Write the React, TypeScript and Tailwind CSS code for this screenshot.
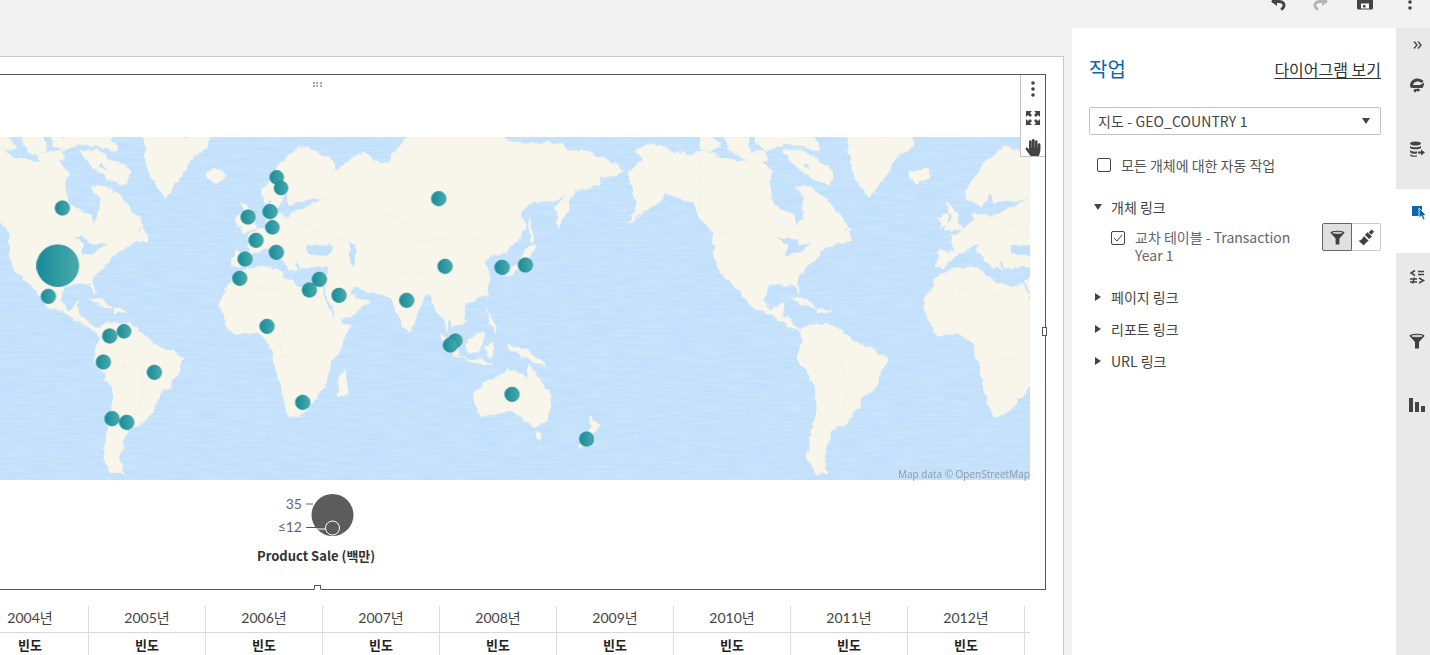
import React from "react";
import { FaHandPaper } from "react-icons/fa";

const sans = "font-['Noto_Sans_CJK_KR','Noto_Sans',sans-serif]";

// map outlines, traced at 3x of screen pixels
const americas = [
  "M-190 60 L-150 40 L-90 60 L-30 75 L10 62 L60 85 L130 95 L180 90 L215 125 L205 165 L215 210 L240 240 L285 255 L295 290 L310 245 L310 205 L290 172 L330 170 L385 212 L405 235 L440 290 L425 300 L455 332 L420 335 L378 352 L345 385 L320 412 L285 450 L297 490 L280 458 L245 462 L200 465 L190 510 L215 545 L250 515 L250 535 L240 560 L272 570 L300 600 L340 580 L400 585 L440 612 L470 642 L520 660 L562 685 L545 722 L525 772 L490 792 L480 822 L440 880 L395 897 L385 930 L370 975 L382 1030 L345 1030 L325 985 L335 900 L355 785 L322 730 L292 680 L310 625 L298 600 L262 585 L210 550 L150 525 L105 465 L60 420 L40 370 L42 312 L0 255 L-20 215 L-100 190 L-130 220 L-220 275 L-190 245 L-200 190 L-215 125 L-170 90 Z",
  "M0 21 L35 21 L62 50 L25 62 L0 52 Z",
  "M75 21 L140 21 L150 60 L110 70 L85 48 Z",
  "M115 72 L195 62 L205 92 L135 88 Z",
  "M165 21 L345 21 L362 62 L300 47 L245 42 L205 60 L175 45 Z",
  "M250 62 L300 60 L405 125 L388 162 L345 148 L290 112 Z",
  "M420 312 L445 295 L458 330 L430 325 Z",
  "M445 21 L640 21 L635 50 L590 80 L560 130 L520 185 L510 202 L480 165 L460 130 L450 90 Z",
  "M628 125 L680 118 L688 140 L655 158 L632 145 Z",
  "M278 505 L320 512 L350 530 L310 522 Z",
  "M355 535 L395 545 L355 550 Z",
];

const afroEurasia = [
  "M792 215 L788 180 L840 100 L900 50 L942 62 L1000 95 L1012 122 L1050 88 L1090 72 L1150 105 L1172 90 L1220 21 L1510 21 L1540 40 L1630 40 L1690 45 L1700 65 L1750 60 L1810 85 L1870 120 L1840 140 L1800 135 L1795 165 L1720 180 L1700 240 L1675 295 L1668 240 L1700 190 L1670 210 L1595 210 L1555 260 L1580 285 L1550 330 L1520 365 L1470 380 L1450 395 L1470 440 L1460 490 L1390 525 L1395 575 L1365 590 L1345 560 L1340 605 L1325 560 L1310 545 L1295 500 L1275 490 L1230 600 L1212 590 L1180 505 L1130 490 L1062 470 L1045 490 L1105 515 L1050 558 L1012 568 L978 478 L962 455 L985 430 L985 410 L900 410 L895 385 L872 420 L855 395 L825 345 L790 358 L758 372 L725 410 L695 405 L703 365 L752 368 L742 318 L795 290 L812 250 L860 262 L920 232 L985 205 L905 208 L870 222 L858 168 L905 130 L868 162 L835 235 L812 210 Z",
  "M657 525 L700 440 L760 410 L830 415 L850 442 L905 472 L958 462 L998 560 L1050 590 L1022 650 L990 702 L975 770 L900 855 L870 860 L850 810 L830 722 L810 640 L770 610 L710 615 L680 590 Z",
  "M1015 760 L1035 720 L1042 785 L1018 800 Z",
  "M728 218 L752 240 L770 295 L722 305 L745 265 Z",
  "M708 262 L730 250 L732 285 L708 290 Z",
  "M830 345 L878 395 L895 420 L865 408 L820 362 Z",
  "M1422 785 L1530 715 L1580 745 L1590 710 L1610 740 L1655 800 L1640 870 L1600 890 L1540 840 L1445 860 L1430 830 Z",
  "M1605 905 L1625 910 L1615 928 Z",
  "M1770 860 L1800 885 L1785 905 L1750 945 L1735 950 L1752 930 L1775 890 Z",
  "M1395 640 L1450 605 L1445 650 L1430 665 L1405 665 Z",
  "M1315 610 L1345 630 L1380 670 L1370 680 Z",
  "M1375 680 L1420 690 L1480 700 L1430 698 Z",
  "M1525 650 L1580 660 L1635 705 L1595 695 L1550 670 Z",
  "M1460 535 L1490 605 L1475 590 Z",
  "M1455 650 L1480 640 L1470 680 Z",
  "M1515 440 L1570 410 L1605 350 L1590 345 L1555 400 Z",
  "M1590 270 L1600 330 L1592 330 Z",
  "M1225 590 L1235 605 L1225 608 Z",
  "M1180 360 L1200 372 L1190 385 Z",
];

const water = [
  "M232 325 L262 318 L300 345 L335 340 L290 372 L255 375 L262 345 Z",
  "M308 112 L320 100 L330 118 Z",
  "M920 342 L1000 350 L985 380 L925 372 Z",
  "M1050 340 L1068 345 L1062 410 L1050 400 Z",
];

const borders = [
  "M40 310 L290 310",
  "M330 720 L420 700 L430 810 L400 860",
  "M720 470 L830 480 L960 500 L850 590 L840 680 L960 690",
  "M1100 250 L1190 260 L1260 330 L1440 330 L1500 300",
  "M1100 440 L1270 430 L1280 490",
  "M870 260 L990 320 L1050 330",
  "M2100 65 L2100 250",
];

const pins: [number, number, number][] = [
  [187, 234, 22], [173, 407, 63], [145, 499, 22], [329, 618, 22], [372, 604, 21], [310, 696, 22],
  [463, 727, 22], [336, 866, 22], [380, 877, 22], [744, 261, 22], [810, 245, 22], [830, 142, 21],
  [843, 174, 21], [817, 292, 21], [768, 331, 22], [829, 367, 22], [735, 387, 22], [719, 445, 22],
  [958, 448, 22], [928, 480, 22], [1017, 496, 22], [801, 589, 22], [908, 817, 22], [1316, 206, 22],
  [1335, 409, 22], [1506, 412, 22], [1576, 405, 22], [1220, 511, 22], [1366, 632, 21], [1351, 645, 22],
  [1536, 793, 22], [1760, 927, 22],
];

const years = ["2004년", "2005년", "2006년", "2007년", "2008년", "2009년", "2010년", "2011년", "2012년"];

const WorldMap = () => (
  <svg width={1030} height={343} viewBox="0 21 3090 1029" className="block">
    <defs>
      <linearGradient id="pin" x1="0" y1="0" x2="1" y2="0">
        <stop offset="0" stopColor="#168b99" />
        <stop offset="1" stopColor="#4aabad" />
      </linearGradient>
      {/* frays the hand traced coasts a little */}
      <filter id="coast" filterUnits="userSpaceOnUse" x="0" y="0" width="3090" height="1100">
        <feTurbulence type="fractalNoise" baseFrequency="0.035" numOctaves="3" seed="4" result="n" />
        <feDisplacementMap in="SourceGraphic" in2="n" scale="22" xChannelSelector="R" yChannelSelector="G" />
        <feGaussianBlur stdDeviation="1.2" />
      </filter>
      <filter id="waves" filterUnits="userSpaceOnUse" x="0" y="0" width="3090" height="1100">
        <feTurbulence type="fractalNoise" baseFrequency="0.012 0.14" numOctaves="2" seed="7" />
        <feColorMatrix type="matrix" values="0 0 0 0 1  0 0 0 0 1  0 0 0 0 1  0 0 0 0.3 -0.1" />
      </filter>
    </defs>
    <rect x="0" y="21" width="3090" height="1029" fill="#c2e0fc" />
    <rect x="0" y="21" width="3090" height="1029" filter="url(#waves)" />
    <g filter="url(#coast)">
      {[-2112, 0, 2112].map((dx) => (
        <g key={dx} transform={`translate(${dx} 0)`}>
          <g transform="translate(2100 0)">
            {americas.map((d, i) => (
              <path key={i} d={d} fill="#f8f6ea" stroke="#f8f6ea" strokeWidth="4" strokeLinejoin="round" />
            ))}
          </g>
          {afroEurasia.map((d, i) => (
            <path key={i} d={d} fill="#f8f6ea" stroke="#f8f6ea" strokeWidth="4" strokeLinejoin="round" />
          ))}
          {water.map((d, i) => (
            <path key={i} d={d} fill="#c2e0fc" transform={i < 2 ? "translate(2100 0)" : undefined} />
          ))}
          {borders.map((d, i) => (
            <path key={i} d={d} fill="none" stroke="#f0eee0" strokeWidth="2" />
          ))}
        </g>
      ))}
    </g>
    {pins.map(([x, y, r], i) => (
      <circle key={i} cx={x} cy={y} r={r} fill="url(#pin)" stroke="#17818d" strokeWidth="1.5" />
    ))}
  </svg>
);

const Funnel = ({ className = "" }: { className?: string }) => (
  <svg viewBox="0 0 16 16" className={className}>
    <path d="M0.5 3 C0.5 0 15.5 0 15.5 3 L10 9 V15.5 H6 V9 Z" fill="#3f3f3f" />
    <ellipse cx="8" cy="3" rx="5.5" ry="1.2" fill="#c9c9c9" />
  </svg>
);

const Brush = () => (
  <svg viewBox="0 0 16 16" className="w-[17px] h-[17px]">
    <path d="M0.5 11 C3 10.500 4.500 9 5.500 6.500 L10 11 C8 12 6.500 14 5.500 15.500 Z" fill="#3f3f3f" />
    <path d="M6.500 5.500 L9 3 L13 7 L10.500 9.500 Z" fill="#3f3f3f" />
    <path d="M10 3 L13 0.500 L15 2.500 L12.500 5.500 Z" fill="#3f3f3f" />
  </svg>
);

const Expand = () => (
  <svg viewBox="0 0 16 16" className="w-[16px] h-[16px]">
    <path d="M1 1 H7 L5 3 L7 5 L5 7 L3 5 L1 7 Z" fill="#444" />
    <path d="M15 1 H9 L11 3 L9 5 L11 7 L13 5 L15 7 Z" fill="#444" />
    <path d="M1 15 H7 L5 13 L7 11 L5 9 L3 11 L1 9 Z" fill="#444" />
    <path d="M15 15 H9 L11 13 L9 11 L11 9 L13 11 L15 9 Z" fill="#444" />
  </svg>
);

const Dots = () => (
  <svg viewBox="0 0 4 16" className="w-[4px] h-[16px]">
    <circle cx="2" cy="2" r="1.8" fill="#444" />
    <circle cx="2" cy="8" r="1.8" fill="#444" />
    <circle cx="2" cy="14" r="1.8" fill="#444" />
  </svg>
);

const Caret = ({ open = false }: { open?: boolean }) => (
  <svg viewBox="0 0 8 8" className="w-[8px] h-[8px]">
    {open ? <path d="M0 1 H8 L4 7 Z" fill="#444" /> : <path d="M1 0 L7 4 L1 8 Z" fill="#444" />}
  </svg>
);

const RailRow = ({ active = false, children }: { active?: boolean; children: React.ReactNode }) => (
  <div className={`h-[64px] pt-[16px] pl-[13px] ${active ? "bg-white" : ""}`}>
    <div className="w-[16px] h-[16px]">{children}</div>
  </div>
);

const LinkRow = ({ label }: { label: string }) => (
  <div className="flex items-center h-[32px] pl-[5px] gap-[9px] text-[14px] text-[#444]">
    <Caret />
    <span>{label}</span>
  </div>
);

export default function App() {
  return (
    <div className={`w-[1430px] h-[655px] overflow-hidden flex bg-[#f2f2f2] ${sans}`}>
      {/* canvas */}
      <div className="w-[1072px] shrink-0 pt-[56px] pr-[8px]">
        <div className="h-[599px] bg-white border-t border-r border-[#c8c8c8] pt-[17px] pr-[17px]">
          <div className="relative h-[516px] border-t border-r border-b border-[#555]">
            <div className="h-[62px] pl-[313px] pt-[7px]">
              <div className="grid grid-cols-3 gap-[1px] w-[9px] h-[5px]">
                {[0, 1, 2, 3, 4, 5].map((i) => (
                  <span key={i} className="w-[2px] h-[2px] bg-[#aaa]" />
                ))}
              </div>
            </div>
            <WorldMap />
            <div className="absolute left-[898px] top-[392px] text-[10px] leading-[14px] text-[#8b9aa8] font-['Open_Sans',sans-serif] whitespace-nowrap">
              Map data © OpenStreetMap
            </div>

            {/* legend */}
            <div className="ml-[257px] w-[120px] relative h-[90px]">
              <div className="flex">
                <div className="w-[45px] pt-[12px] text-right text-[14px] leading-[23px] text-[#666] font-['Lato',sans-serif]">
                  <div>35</div>
                  <div>≤12</div>
                </div>
                <svg width="60" height="50" viewBox="0 0 60 50" className="mt-[14px]">
                  <circle cx="30.5" cy="21" r="21" fill="#5c5c5c" />
                  <line x1="4" y1="10" x2="11" y2="10" stroke="#666" />
                  <line x1="4" y1="33.5" x2="30" y2="33.5" stroke="#555" />
                  <line x1="9" y1="35" x2="25" y2="35" stroke="#fff" />
                  <circle cx="30.5" cy="34" r="7" fill="#5c5c5c" stroke="#fff" />
                </svg>
              </div>
              <div className="absolute left-0 top-[67px] text-[13px] leading-[18px] font-bold text-[#333] whitespace-nowrap">
                Product Sale (백만)
              </div>
            </div>

            {/* toolbar */}
            <div className="absolute right-0 top-0 w-[25px] h-[82px] bg-white border-l border-b border-[#c4c4c4] flex flex-col items-center">
              <div className="mt-[6px] h-[16px] flex items-center"><Dots /></div>
              <div className="mt-[13px] h-[16px] flex items-center"><Expand /></div>
              <div className="mt-[13px] h-[16px] flex items-center">
                <FaHandPaper className="w-[16px] h-[17px] text-[#444]" />
              </div>
            </div>
            <div className="absolute -right-[2px] top-[252px] w-[5px] h-[9px] bg-white border border-[#555]" />
            <div className="absolute left-[314px] -bottom-[1px] w-[7px] h-[5px] bg-white border border-[#555] border-b-white" />
          </div>

          {/* table */}
          <div className="mt-[16px] w-[1030px] font-['Lato','Noto_Sans_CJK_KR',sans-serif] text-[#333]">
            <div className="flex h-[27px] border-b border-[#d8d8d8] text-[14px] leading-[24px] text-[#444] -ml-[28px]">
              {years.map((y) => (
                <div key={y} className="w-[117px] shrink-0 text-center border-r border-[#dedede]">
                  {y}
                </div>
              ))}
            </div>
            <div className="flex h-[24px] text-[13px] leading-[24px] font-bold text-[#222] -ml-[28px]">
              {years.map((y) => (
                <div key={y} className={`w-[117px] shrink-0 text-center border-r border-[#dedede] ${sans}`}>
                  빈도
                </div>
              ))}
            </div>
          </div>
        </div>
      </div>

      {/* right side */}
      <div className="flex-1 flex flex-col">
        <div className="h-[28px] flex justify-end items-start pr-[12px]">
          <svg viewBox="0 0 16 16" className="w-[16px] h-[16px] -mt-[6px] mr-[29px] overflow-visible">
            <path d="M3 7.500 H10 C14 7.500 15.500 10 15 12 C14.500 14 13 15 12 15.500" fill="none" stroke="#444" strokeWidth="3" />
            <path d="M2 7.500 L8 3 V12 Z" fill="#444" />
          </svg>
          <svg viewBox="0 0 16 16" className="w-[16px] h-[16px] -mt-[6px] mr-[27px] overflow-visible">
            <path d="M13 7.500 H6 C2 7.500 0.500 10 1 12 C1.500 14 3 15 4 15.500" fill="none" stroke="#b5b5b5" strokeWidth="3" />
            <path d="M14 7.500 L8 3 V12 Z" fill="#b5b5b5" />
          </svg>
          <svg viewBox="0 0 16 16" className="w-[16px] h-[16px] -mt-[6px] mr-[35px]">
            <path d="M0 0 H16 V14 Q16 15.500 14.500 15.500 H1.500 Q0 15.500 0 14 Z" fill="#444" />
            <rect x="4" y="9.500" width="8" height="5" fill="#fff" />
            <rect x="6" y="11" width="2.500" height="2.500" fill="#444" />
          </svg>
          <div className="-mt-[6px] mr-[6px]"><Dots /></div>
        </div>

        <div className="flex-1 flex">
          {/* actions panel */}
          <div className="w-[324px] bg-white pl-[17px] pr-[15px] pt-[27px]">
            <div className="flex justify-between items-center h-[28px]">
              <span className="text-[20px] text-[#0b66ad]">작업</span>
              <span className="text-[16px] text-[#333] underline underline-offset-2">다이어그램 보기</span>
            </div>
            <div className="mt-[24px] h-[28px] border border-[#c4c4c4] rounded-[2px] flex items-center justify-between pl-[8px] pr-[10px] text-[14px] text-[#444]">
              <span className="tracking-[0.1px]">지도 - GEO_COUNTRY 1</span>
              <svg viewBox="0 0 8 6" className="w-[8px] h-[6px]">
                <path d="M0 0 H8 L4 6 Z" fill="#444" />
              </svg>
            </div>
            <div className="mt-[19px] pl-[8px] flex items-center gap-[10px] h-[22px] text-[14px] text-[#555]">
              <span className="w-[14px] h-[14px] rounded-[2px] border border-[#444] bg-white" />
              <span>모든 개체에 대한 자동 작업</span>
            </div>
            <div className="mt-[20px] flex items-center h-[22px] pl-[5px] gap-[9px] text-[14px] text-[#444]">
              <Caret open />
              <span>개체 링크</span>
            </div>
            <div className="mt-[5px] pl-[22px] flex items-start">
              <span className="mt-[8px] w-[14px] h-[14px] rounded-[2px] border border-[#444] flex items-center justify-center shrink-0">
                <svg viewBox="0 0 10 10" className="w-[10px] h-[10px]">
                  <path d="M1 5 L4 8 L9 2" fill="none" stroke="#444" strokeWidth="1" />
                </svg>
              </span>
              <span className="ml-[10px] w-[170px] pt-[5px] text-[14px] leading-[18px] text-[#666]">
                교차 테이블 - Transaction Year 1
              </span>
              <div className="ml-auto flex">
                <div className="w-[30px] h-[28px] bg-[#e0e0e0] border border-[#666] rounded-l-[2px] flex items-center justify-center">
                  <Funnel className="w-[15px] h-[15px]" />
                </div>
                <div className="w-[29px] h-[28px] border border-l-0 border-[#c8c8c8] rounded-r-[2px] flex items-center justify-center">
                  <Brush />
                </div>
              </div>
            </div>
            <div className="mt-[17px]">
              <LinkRow label="페이지 링크" />
              <LinkRow label="리포트 링크" />
              <LinkRow label="URL 링크" />
            </div>
          </div>

          {/* rail */}
          <div className="flex-1 bg-[#e9e9e9]">
            <div className="h-[33px] pt-[13px] pl-[17px]">
              <svg viewBox="0 0 9 8" className="w-[9px] h-[8px]">
                <path d="M1 0.500 L4 4 L1 7.500 M5 0.500 L8 4 L5 7.500" fill="none" stroke="#444" strokeWidth="1.300" />
              </svg>
            </div>
            <RailRow>
              <svg viewBox="0 0 16 16">
                <path d="M1 9 C1 4 4.500 1.500 8.500 1.500 C11 1.500 13 2.500 14.500 4 L12.500 6 C11.500 5 10 4.500 8.500 4.500 C6 4.500 4 6.500 4 8 L11 8 L15 5.500 C15 8 14.500 9.500 13.500 11 L3 11 C2 11 1 10 1 9 Z" fill="#444" />
                <path d="M6.500 15.500 C4 15 4 12.500 6 12 L8.500 12 L8.500 11 L11.500 13 L8.500 15 L8.500 13.800 C7.500 13.800 6.500 14.500 6.500 15.500 Z" fill="#444" />
              </svg>
            </RailRow>
            <RailRow>
              <svg viewBox="0 0 16 16">
                <ellipse cx="6.500" cy="2.500" rx="5.500" ry="2" fill="#444" />
                <path d="M1 5 C2 6.800 11 6.800 12 5 V7 C11 8.800 2 8.800 1 7 Z" fill="#444" />
                <path d="M1 9 C2 10.800 6 10.800 8 10.500 V12.500 C5 13 2 12.800 1 11 Z" fill="#444" />
                <path d="M1 13 C2 14.800 6 14.800 8 14.500 V15.500 C5 16 2 15.800 1 14.500 Z" fill="#444" />
                <path d="M9 10.500 H12 V8.500 L16 11.500 L12 14.500 V12.500 H9 Z" fill="#444" />
              </svg>
            </RailRow>
            <RailRow active>
              <svg viewBox="0 0 16 16" className="overflow-visible">
                <rect x="3" y="1" width="10" height="10" fill="#0b66ad" />
                <path d="M10 3 L10 13 L12.500 11 L14 15 L16 14 L14.500 10.500 L17 10 Z" fill="#0b66ad" stroke="#fff" strokeWidth="0.800" />
              </svg>
            </RailRow>
            <RailRow>
              <svg viewBox="0 0 16 16" fill="none" stroke="#444" strokeWidth="1.500">
                <path d="M6 1.500 L2 4 L6 6.500" />
                <path d="M9 2.500 H15 M9 5.500 H15" />
                <path d="M1 10 H8 M1 13 H8 M5.500 8.500 L3.500 14.500" />
                <path d="M10 9 L14.500 11.500 L10 14" />
              </svg>
            </RailRow>
            <RailRow>
              <Funnel className="w-[16px] h-[16px]" />
            </RailRow>
            <RailRow>
              <svg viewBox="0 0 16 16">
                <rect x="0" y="1" width="4" height="14" fill="#444" />
                <rect x="6" y="5" width="4" height="10" fill="#444" />
                <rect x="12" y="9" width="4" height="6" fill="#444" />
              </svg>
            </RailRow>
          </div>
        </div>
      </div>
    </div>
  );
}
